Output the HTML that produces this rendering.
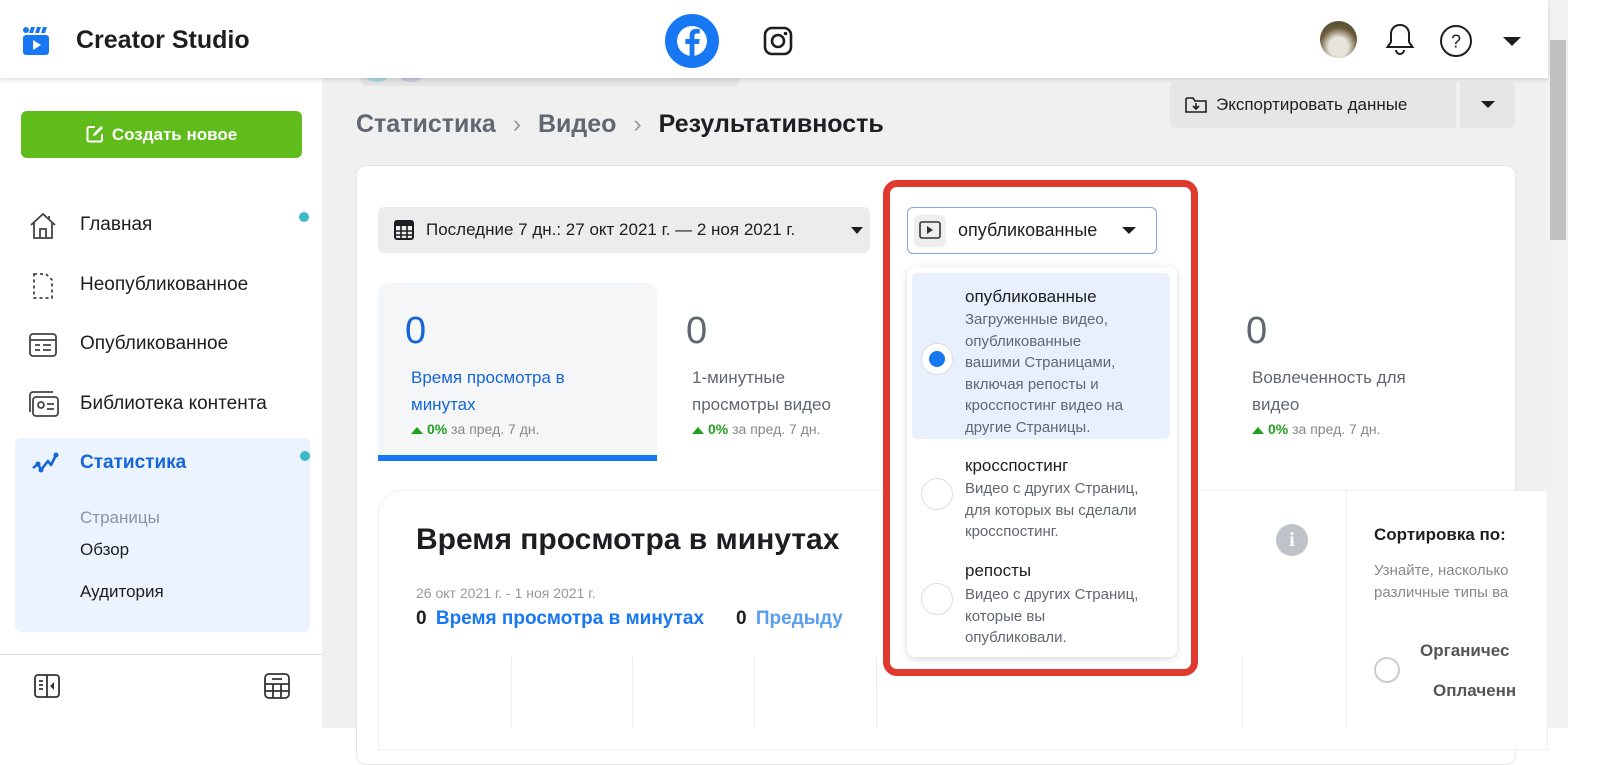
<!DOCTYPE html>
<html><head><meta charset="utf-8"><style>
*{box-sizing:border-box;margin:0;padding:0}
body{width:1600px;height:728px;overflow:hidden;background:#fff;font-family:"Liberation Sans",Arial,sans-serif;position:relative;color:#1c1e21}
.abs{position:absolute}
.main{left:322px;top:0;width:1226px;height:728px;background:#f0f0f0}
.hdr{left:0;top:0;width:1548px;height:78px;background:#fff;box-shadow:0 2px 4px rgba(0,0,0,.12);z-index:5}
.side{left:0;top:78px;width:322px;height:650px;background:#fff}
.nav{position:absolute;left:80px;font-size:19px;color:#1c1e21}
.card{left:356px;top:165px;width:1160px;height:600px;background:#fff;border-radius:10px;border:1px solid #e6e6e6}
.gray{color:#606770}
.pct{font-size:14px;color:#888}
.pct b{color:#1ea01e}
.pct i{display:inline-block;width:0;height:0;border-left:6px solid transparent;border-right:6px solid transparent;border-bottom:7px solid #1ea01e;margin-right:4px}
.opt{position:absolute;left:0;width:100%}
.radio{position:absolute;left:14px;width:32px;height:32px;border-radius:50%;border:1px solid #ddd;background:#fff}
.ot{position:absolute;left:58px;font-size:17px;color:#1c1e21}
.od{position:absolute;left:58px;font-size:15px;color:#606770;line-height:21.5px}
</style></head><body>
<div class="abs main"></div>
<!-- scrollbar -->
<div class="abs" style="left:1548px;top:0;width:20px;height:728px;background:#f1f1f1"></div>
<div class="abs" style="left:1550px;top:40px;width:16px;height:200px;background:#c1c1c1"></div>
<div class="abs" style="left:1568px;top:0;width:32px;height:728px;background:#fff"></div>

<div class="abs hdr">
  <svg class="abs" style="left:22px;top:26px" width="28" height="30" viewBox="0 0 28 30"><rect x="1" y="9" width="26" height="20" rx="3" fill="#1877f2"/><circle cx="4" cy="4" r="3" fill="#1877f2"/><path d="M9 1h4l-2 6h-4zM15 1h4l-2 6h-4zM21 1h4l-2 6h-4z" fill="#1877f2"/><path d="M11 14l8 5-8 5z" fill="#fff"/></svg>
  <div class="abs" style="left:76px;top:26px;font-size:25px;font-weight:bold;color:#1c1e21">Creator Studio</div>
  <svg class="abs" style="left:665px;top:14px" width="54" height="54" viewBox="0 0 54 54"><circle cx="27" cy="27" r="27" fill="#1877f2"/><circle cx="27" cy="27" r="15" fill="#fff"/><path d="M29.5 44V30h4.5l.7-5h-5.2v-3c0-1.5.5-2.5 2.6-2.5h2.7v-4.4c-.5-.1-2-.2-3.8-.2-3.8 0-6.4 2.3-6.4 6.5V25h-4.3v5h4.3v14z" fill="#1877f2"/></svg>
  <svg class="abs" style="left:763px;top:26px" width="30" height="30" viewBox="0 0 30 30"><rect x="2" y="2" width="26" height="26" rx="7" fill="none" stroke="#1c1e21" stroke-width="2.6"/><circle cx="15" cy="15" r="6" fill="none" stroke="#1c1e21" stroke-width="2.6"/><circle cx="22.5" cy="7.5" r="1.8" fill="#1c1e21"/></svg>
  <div class="abs" style="left:1320px;top:21px;width:37px;height:37px;border-radius:50%;background:radial-gradient(circle at 50% 70%,#e8e4dc 30%,#6b5a3a 60%,#3a4a2a)"></div>
  <svg class="abs" style="left:1384px;top:22px" width="32" height="36" viewBox="0 0 32 36"><path d="M16 3c-5.5 0-9 4-9 9v8l-3.5 5h25L25 20v-8c0-5-3.5-9-9-9z" fill="none" stroke="#1c1e21" stroke-width="2"/><path d="M12 28a4 4 0 0 0 8 0" fill="none" stroke="#1c1e21" stroke-width="2"/></svg>
  <svg class="abs" style="left:1439px;top:24px" width="34" height="34" viewBox="0 0 34 34"><circle cx="17" cy="17" r="15" fill="none" stroke="#1c1e21" stroke-width="2"/><text x="17" y="23.5" text-anchor="middle" font-family="Liberation Sans" font-size="18" fill="#1c1e21">?</text></svg>
  <div class="abs" style="left:1503px;top:37px;border-left:9px solid transparent;border-right:9px solid transparent;border-top:9px solid #1c1e21"></div>
</div>

<div class="abs side">
  <div class="abs" style="left:21px;top:33px;width:281px;height:47px;background:#5fbc1a;border-radius:6px;color:#fff;font-weight:bold;font-size:17px;line-height:47px;text-align:center">
    <svg style="vertical-align:-3px;margin-right:8px" width="18" height="18" viewBox="0 0 18 18"><path d="M9 2H3a1.5 1.5 0 0 0-1.5 1.5v11.5A1.5 1.5 0 0 0 3 16.5h11.5A1.5 1.5 0 0 0 16 15V9" fill="none" stroke="#fff" stroke-width="2"/><path d="M7 11l1-3 7-7 2 2-7 7z" fill="#fff"/></svg>Создать новое</div>
  <svg class="abs" style="left:28px;top:134px" width="30" height="28" viewBox="0 0 30 28"><path d="M3 13L15 2l12 11M6 10v16h18V10M12 26v-9h6v9M21 4v4" fill="none" stroke="#444" stroke-width="1.8"/></svg>
  <div class="nav" style="top:136px">Главная</div>
  <div class="abs" style="left:299px;top:134px;width:10px;height:10px;border-radius:50%;background:#3bbac8"></div>
  <svg class="abs" style="left:32px;top:194px" width="22" height="28" viewBox="0 0 22 28"><path d="M2 2h12l6 6v18H2z" fill="none" stroke="#444" stroke-width="1.8" stroke-dasharray="3 3"/></svg>
  <div class="nav" style="top:196px">Неопубликованное</div>
  <svg class="abs" style="left:28px;top:254px" width="30" height="26" viewBox="0 0 30 26"><rect x="2" y="2" width="26" height="22" rx="3" fill="none" stroke="#444" stroke-width="1.8"/><path d="M2 8h26M7 13h5M7 18h5M15 13h8M15 18h8" stroke="#444" stroke-width="1.8"/></svg>
  <div class="nav" style="top:255px">Опубликованное</div>
  <svg class="abs" style="left:28px;top:312px" width="32" height="28" viewBox="0 0 32 28"><rect x="5" y="7" width="25" height="19" rx="3" fill="none" stroke="#444" stroke-width="1.8"/><path d="M2 22V5a3 3 0 0 1 3-3h20" fill="none" stroke="#444" stroke-width="1.8"/><circle cx="13" cy="15" r="3" fill="none" stroke="#444" stroke-width="1.8"/><path d="M19 14h7M19 19h7" stroke="#444" stroke-width="1.8"/></svg>
  <div class="nav" style="top:315px">Библиотека контента</div>
  <div class="abs" style="left:15px;top:360px;width:295px;height:194px;background:#ebf3fe;border-radius:6px"></div>
  <svg class="abs" style="left:31px;top:374px" width="28" height="22" viewBox="0 0 28 22"><path d="M2 16l5-4 3 6 7-9 3 4 5-10" fill="none" stroke="#1565d8" stroke-width="2.6" stroke-linejoin="round"/><circle cx="7" cy="12" r="2.5" fill="#1565d8"/><circle cx="10" cy="18" r="2.5" fill="#1565d8"/><circle cx="25" cy="3" r="2.5" fill="#1565d8"/></svg>
  <div class="nav" style="top:374px;color:#1565d8;font-weight:bold">Статистика</div>
  <div class="abs" style="left:300px;top:373px;width:10px;height:10px;border-radius:50%;background:#3bbac8"></div>
  <div class="nav" style="top:430px;font-size:17px;color:#8d949e">Страницы</div>
  <div class="nav" style="top:462px;font-size:17px">Обзор</div>
  <div class="nav" style="top:504px;font-size:17px">Аудитория</div>
  <div class="abs" style="left:0;top:576px;width:322px;height:1px;background:#ddd"></div>
  <svg class="abs" style="left:33px;top:595px" width="28" height="26" viewBox="0 0 28 26"><rect x="2" y="2" width="24" height="22" rx="3" fill="none" stroke="#333" stroke-width="1.8"/><path d="M14 2v22M6 8h4M6 12h4M6 16h4" stroke="#333" stroke-width="1.8"/><path d="M21 9l-4 4 4 4z" fill="#333"/></svg>
  <svg class="abs" style="left:263px;top:594px" width="28" height="28" viewBox="0 0 28 28"><rect x="2" y="2" width="24" height="24" rx="4" fill="none" stroke="#333" stroke-width="1.8"/><path d="M9 7h10M2 12h24M2 19h24M10 12v14M18 12v14" stroke="#333" stroke-width="1.8"/></svg>
</div>

<div class="abs" style="left:360px;top:70px;width:380px;height:16px;background:#e4e4e4;border-radius:0 0 8px 8px"></div>
<div class="abs" style="left:362px;top:68px;width:30px;height:14px;border-radius:0 0 15px 15px;background:#a8d8de"></div>
<div class="abs" style="left:396px;top:68px;width:30px;height:14px;border-radius:0 0 15px 15px;background:#c8c8de"></div>

<div class="abs" style="left:356px;top:110px;font-size:25px;font-weight:bold;color:#606770">Статистика <span style="font-weight:normal;color:#999;margin:0 10px">›</span> Видео <span style="font-weight:normal;color:#999;margin:0 10px">›</span> <span style="color:#1c1e21">Результативность</span></div>

<div class="abs" style="left:1170px;top:82px;width:286px;height:46px;background:#e6e6e6;border-radius:6px 0 0 6px;font-size:17px;line-height:46px;padding-left:46px;color:#1c1e21">Экспортировать данные</div>
<svg class="abs" style="left:1185px;top:96px" width="22" height="18" viewBox="0 0 22 18"><path d="M1 3v13h20V5H10L8 2H2z" fill="none" stroke="#1c1e21" stroke-width="1.6"/><path d="M11 7v6M8 10l3 3 3-3" fill="none" stroke="#1c1e21" stroke-width="1.6"/></svg>
<div class="abs" style="left:1460px;top:82px;width:55px;height:46px;background:#e6e6e6;border-radius:0 6px 6px 0"></div>
<div class="abs" style="left:1481px;top:101px;border-left:7px solid transparent;border-right:7px solid transparent;border-top:7px solid #1c1e21"></div>

<div class="abs card"></div>
<div class="abs" style="left:378px;top:207px;width:492px;height:46px;background:#ececec;border-radius:6px;font-size:17px;line-height:46px;padding-left:48px">Последние 7 дн.: 27 окт 2021 г. — 2 ноя 2021 г.</div>
<svg class="abs" style="left:394px;top:220px" width="20" height="20" viewBox="0 0 20 20"><rect x="1" y="1" width="18" height="18" rx="2" fill="none" stroke="#1c1e21" stroke-width="2"/><rect x="1" y="1" width="18" height="5" fill="#1c1e21"/><path d="M1 11h18M1 15h18M7 6v13M13 6v13" stroke="#1c1e21" stroke-width="1.6"/></svg>
<div class="abs" style="left:851px;top:227px;border-left:6px solid transparent;border-right:6px solid transparent;border-top:7px solid #1c1e21"></div>

<!-- tabs -->
<div class="abs" style="left:378px;top:283px;width:279px;height:178px;background:#f5f6f7;border-radius:10px 10px 0 0"></div>
<div class="abs" style="left:378px;top:455px;width:279px;height:6px;background:#1877f2"></div>
<div class="abs" style="left:405px;top:310px;font-size:38px;color:#1565d8">0</div>
<div class="abs" style="left:411px;top:364px;font-size:17px;line-height:27px;color:#1565d8">Время просмотра в<br>минутах</div>
<div class="abs pct" style="left:411px;top:421px"><i></i><b>0%</b> за пред. 7 дн.</div>
<div class="abs" style="left:686px;top:310px;font-size:38px;color:#606770">0</div>
<div class="abs gray" style="left:692px;top:364px;font-size:17px;line-height:27px">1-минутные<br>просмотры видео</div>
<div class="abs pct" style="left:692px;top:421px"><i></i><b>0%</b> за пред. 7 дн.</div>
<div class="abs" style="left:1246px;top:310px;font-size:38px;color:#606770">0</div>
<div class="abs gray" style="left:1252px;top:364px;font-size:17px;line-height:27px">Вовлеченность для<br>видео</div>
<div class="abs pct" style="left:1252px;top:421px"><i></i><b>0%</b> за пред. 7 дн.</div>

<!-- chart card -->
<div class="abs" style="left:378px;top:490px;width:1170px;height:260px;background:#fff;border:1px solid #eee;border-radius:24px 0 0 0"></div>
<div class="abs" style="left:1346px;top:490px;width:1px;height:238px;background:#eee"></div>
<div class="abs" style="left:416px;top:523px;font-size:30px;font-weight:bold;color:#1c1e21">Время просмотра в минутах</div>
<div class="abs" style="left:416px;top:585px;font-size:14px;color:#999">26 окт 2021 г. - 1 ноя 2021 г.</div>
<div class="abs" style="left:416px;top:608px;font-size:19px;font-weight:bold;white-space:nowrap">0 <span style="color:#1877f2;margin-left:4px">Время просмотра в минутах</span><span style="margin-left:32px">0</span> <span style="color:#5a9ef0;margin-left:4px">Предыду</span></div>
<div class="abs" style="left:511px;top:657px;width:1px;height:71px;background:#eee"></div>
<div class="abs" style="left:632px;top:657px;width:1px;height:71px;background:#eee"></div>
<div class="abs" style="left:754px;top:657px;width:1px;height:71px;background:#eee"></div>
<div class="abs" style="left:876px;top:657px;width:1px;height:71px;background:#eee"></div>
<div class="abs" style="left:1242px;top:657px;width:1px;height:71px;background:#eee"></div>
<div class="abs" style="left:1276px;top:524px;width:32px;height:32px;border-radius:50%;background:#bec3c9;color:#fff;font-weight:bold;font-size:20px;text-align:center;line-height:32px;font-family:'Liberation Serif',serif">i</div>
<div class="abs" style="left:1374px;top:525px;font-size:17px;font-weight:bold;white-space:nowrap">Сортировка по:</div>
<div class="abs" style="left:1374px;top:560px;font-size:15px;color:#888;line-height:22px;white-space:nowrap">Узнайте, насколько<br>различные типы ва</div>
<div class="abs" style="left:1374px;top:657px;width:26px;height:26px;border-radius:50%;border:2px solid #ccc"></div>
<div class="abs" style="left:1420px;top:641px;font-size:17px;font-weight:bold;color:#555;white-space:nowrap">Органичес</div>
<div class="abs" style="left:1433px;top:681px;font-size:17px;font-weight:bold;color:#555;white-space:nowrap">Оплаченн</div>
<div class="abs" style="left:1548px;top:700px;width:20px;height:28px;background:#f1f1f1"></div>

<!-- red highlight -->
<div class="abs" style="left:883px;top:180px;width:315px;height:496px;border:7px solid #e03a2e;border-radius:14px;background:#fff"></div>
<div class="abs" style="left:907px;top:207px;width:250px;height:47px;border:1.5px solid #7fa7e6;border-radius:6px;background:#fff"></div>
<div class="abs" style="left:914px;top:215px;width:32px;height:32px;background:#eee;border-radius:6px"></div>
<svg class="abs" style="left:919px;top:221px" width="22" height="18" viewBox="0 0 22 18"><rect x="1" y="1" width="20" height="16" rx="2" fill="none" stroke="#333" stroke-width="1.6"/><path d="M8 5l6 4-6 4z" fill="#333"/></svg>
<div class="abs" style="left:958px;top:220px;font-size:18px">опубликованные</div>
<div class="abs" style="left:1122px;top:227px;border-left:7px solid transparent;border-right:7px solid transparent;border-top:7px solid #1c1e21"></div>

<div class="abs" style="left:907px;top:267px;width:270px;height:390px;background:#fff;border-radius:8px;box-shadow:0 2px 8px rgba(0,0,0,.15)">
  <div class="abs" style="left:5px;top:6px;width:258px;height:166px;background:#e8f0fd;border-radius:6px"></div>
  <div class="radio" style="top:76px"><div style="position:absolute;left:7px;top:7px;width:16px;height:16px;border-radius:50%;background:#1877f2"></div></div>
  <div class="ot" style="top:20px">опубликованные</div>
  <div class="od" style="top:42px">Загруженные видео,<br>опубликованные<br>вашими Страницами,<br>включая репосты и<br>кросспостинг видео на<br>другие Страницы.</div>
  <div class="radio" style="top:211px"></div>
  <div class="ot" style="top:189px">кросспостинг</div>
  <div class="od" style="top:211px">Видео с других Страниц,<br>для которых вы сделали<br>кросспостинг.</div>
  <div class="radio" style="top:316px"></div>
  <div class="ot" style="top:294px">репосты</div>
  <div class="od" style="top:317px">Видео с других Страниц,<br>которые вы<br>опубликовали.</div>
</div>
</body></html>
